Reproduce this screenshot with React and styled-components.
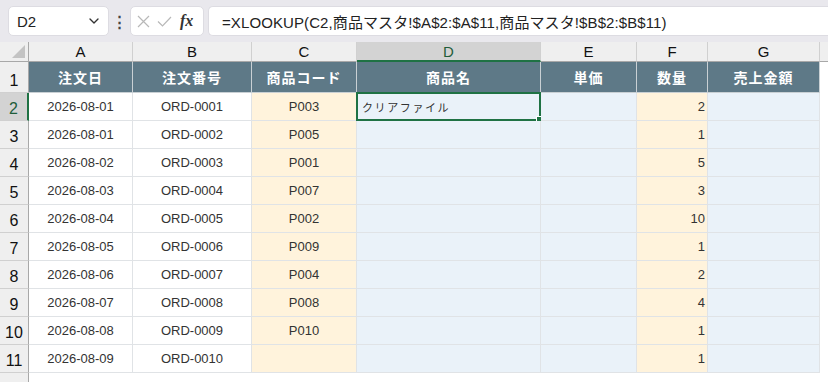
import React from "react";
import styled, { createGlobalStyle } from "styled-components";
import { ChevronDown } from "lucide-react";

const GlobalStyle = createGlobalStyle`
  html, body {
    margin: 0;
    padding: 0;
    background: #ffffff;
    overflow: hidden;
  }
  body {
    font-family: "Liberation Sans", "Noto Sans CJK JP", Arial, sans-serif;
  }
`;

const COLS = [104, 119, 105, 184, 96, 71, 112];
const LETTERS = ["A", "B", "C", "D", "E", "F", "G"];
const HEADERS = ["注文日", "注文番号", "商品コード", "商品名", "単価", "数量", "売上金額"];
const FILLS = ["#ffffff", "#ffffff", "#fff3dc", "#eaf2f9", "#eaf2f9", "#fff3dc", "#eaf2f9"];
const ALIGN = ["center", "center", "center", "left", "right", "right", "right"];

const ROWS = [
  ["2026-08-01", "ORD-0001", "P003", "クリアファイル", "", "2", ""],
  ["2026-08-01", "ORD-0002", "P005", "", "", "1", ""],
  ["2026-08-02", "ORD-0003", "P001", "", "", "5", ""],
  ["2026-08-03", "ORD-0004", "P007", "", "", "3", ""],
  ["2026-08-04", "ORD-0005", "P002", "", "", "10", ""],
  ["2026-08-05", "ORD-0006", "P009", "", "", "1", ""],
  ["2026-08-06", "ORD-0007", "P004", "", "", "2", ""],
  ["2026-08-07", "ORD-0008", "P008", "", "", "4", ""],
  ["2026-08-08", "ORD-0009", "P010", "", "", "1", ""],
  ["2026-08-09", "ORD-0010", "", "", "", "1", ""],
];

const Page = styled.div`
  width: 828px;
  height: 382px;
  overflow: hidden;
  background: #ffffff;
`;

const Toolbar = styled.div`
  display: flex;
  align-items: center;
  height: 42px;
  padding: 0 0 0 8px;
  box-sizing: border-box;
  background: #e9e8ed;
`;

const NameBox = styled.div`
  display: flex;
  align-items: center;
  justify-content: space-between;
  width: 101px;
  height: 30px;
  box-sizing: border-box;
  padding: 0 6px 0 8px;
  background: #ffffff;
  border: 1px solid #dddce2;
  border-radius: 5px;
  font-size: 15px;
  color: #222;
`;

const Dots = styled.div`
  width: 21px;
  text-align: center;
  font-size: 15px;
  font-weight: bold;
  color: #444;
  line-height: 1;
`;

const FxBox = styled.div`
  display: flex;
  align-items: center;
  gap: 7px;
  width: 74px;
  height: 30px;
  box-sizing: border-box;
  padding: 0 4px 0 6px;
  background: #ffffff;
  border: 1px solid #dddce2;
  border-radius: 5px;
  color: #b8b8b8;
`;

const Fx = styled.span`
  font-family: "Liberation Serif", "DejaVu Serif", serif;
  font-style: italic;
  font-weight: bold;
  font-size: 16px;
  color: #333;
  margin-left: 1px;
`;

const FormulaBox = styled.div`
  flex: 1;
  display: flex;
  align-items: center;
  margin-left: 4px;
  height: 30px;
  box-sizing: border-box;
  padding-left: 13px;
  background: #ffffff;
  border: 1px solid #dddce2;
  border-right: none;
  border-radius: 5px 0 0 5px;
  font-size: 15px;
  letter-spacing: 0.1px;
  color: #222;
  white-space: nowrap;
`;

const Grid = styled.div`
  display: grid;
  grid-template-columns: 29px ${COLS.map((w) => `${w}px`).join(" ")} 1fr;
  grid-template-rows: 20px 31px repeat(11, 28px);
`;

const Corner = styled.div`
  position: relative;
  background: #efefef;
  border-right: 1px solid #a8a8a8;
  border-bottom: 1px solid #a8a8a8;
  box-sizing: border-box;
  &::after {
    content: "";
    position: absolute;
    right: 3px;
    bottom: 3px;
    border-left: 13px solid transparent;
    border-bottom: 13px solid #c3c3c3;
  }
`;

const ColHead = styled.div`
  display: flex;
  align-items: center;
  justify-content: center;
  box-sizing: border-box;
  background: ${(p) => (p.$active ? "#d3d3d3" : "#efefef")};
  border-right: 1px solid #d0d0d0;
  border-bottom: ${(p) => (p.$active ? "2px solid #1f7244" : "1px solid #a8a8a8")};
  color: ${(p) => (p.$active ? "#1f5d3a" : "#111")};
  font-size: 15px;
  padding-top: ${(p) => (p.$active ? "1px" : "0")};
`;

const RowHead = styled.div`
  display: flex;
  align-items: flex-end;
  justify-content: center;
  box-sizing: border-box;
  padding-bottom: 2px;
  background: ${(p) => (p.$active ? "#d3d3d3" : "#efefef")};
  border-right: ${(p) => (p.$active ? "2px solid #1f7244" : "1px solid #a8a8a8")};
  border-bottom: 1px solid #d0d0d0;
  color: ${(p) => (p.$active ? "#1f5d3a" : "#111")};
  font-size: 16px;
`;

const HeadCell = styled.div`
  display: flex;
  align-items: center;
  justify-content: center;
  box-sizing: border-box;
  background: #5e7987;
  border-right: 1px solid #c9d0d4;
  border-bottom: 1px solid #c9d0d4;
  color: #ffffff;
  font-weight: bold;
  font-size: 14px;
  letter-spacing: 1px;
  font-family: "Noto Sans CJK JP", "Liberation Sans", sans-serif;
`;

const Cell = styled.div`
  position: relative;
  display: flex;
  align-items: center;
  justify-content: ${(p) =>
    p.$align === "left" ? "flex-start" : p.$align === "right" ? "flex-end" : "center"};
  box-sizing: border-box;
  padding: 0 ${(p) => (p.$align === "right" ? "2px" : "5px")} 0 5px;
  background: ${(p) => p.$fill};
  border-right: 1px solid #e0e3e6;
  border-bottom: 1px solid #e0e3e6;
  color: #333;
  font-size: 13px;
  white-space: nowrap;
`;

const JpText = styled.span`
  font-family: "Noto Sans CJK JP", sans-serif;
  font-size: 11px;
  letter-spacing: 1.6px;
  color: #333;
`;

const Active = styled.div`
  position: absolute;
  left: -1px;
  top: -1px;
  right: -1px;
  bottom: -1px;
  border: 2px solid #1f7244;
  pointer-events: none;
  &::after {
    content: "";
    position: absolute;
    right: -5px;
    bottom: -5px;
    width: 6px;
    height: 6px;
    background: #1f7244;
    border: 1px solid #ffffff;
  }
`;

const Blank = styled.div`
  background: ${(p) => (p.$head ? "#efefef" : "#ffffff")};
  border-bottom: ${(p) => (p.$head ? "1px solid #a8a8a8" : "none")};
  box-sizing: border-box;
`;

const CancelIcon = () => (
  <svg width="13" height="13" viewBox="0 0 13 13" fill="none" stroke="currentColor" strokeWidth="1.2">
    <path d="M1 1 L12 12 M12 1 L1 12" />
  </svg>
);

const EnterIcon = () => (
  <svg width="15" height="11" viewBox="0 0 15 11" fill="none" stroke="currentColor" strokeWidth="1.2">
    <path d="M1 5.5 L5.5 10 L14 1" />
  </svg>
);

export default function App() {
  return (
    <Page>
      <GlobalStyle />
      <Toolbar>
        <NameBox>
          <span>D2</span>
          <ChevronDown size={16} strokeWidth={2} color="#333" />
        </NameBox>
        <Dots>⋮</Dots>
        <FxBox>
          <CancelIcon />
          <EnterIcon />
          <Fx>fx</Fx>
        </FxBox>
        <FormulaBox>=XLOOKUP(C2,商品マスタ!$A$2:$A$11,商品マスタ!$B$2:$B$11)</FormulaBox>
      </Toolbar>
      <Grid>
        <Corner />
        {LETTERS.map((l) => (
          <ColHead key={l} $active={l === "D"}>
            {l}
          </ColHead>
        ))}
        <Blank $head />

        <RowHead>1</RowHead>
        {HEADERS.map((h) => (
          <HeadCell key={h}>{h}</HeadCell>
        ))}
        <Blank />

        {ROWS.map((row, r) => (
          <React.Fragment key={r}>
            <RowHead $active={r === 0}>{r + 2}</RowHead>
            {row.map((v, c) => (
              <Cell key={c} $fill={FILLS[c]} $align={ALIGN[c]}>
                {c === 3 && v ? <JpText>{v}</JpText> : v}
                {r === 0 && c === 3 && <Active />}
              </Cell>
            ))}
            <Blank />
          </React.Fragment>
        ))}

        <RowHead>12</RowHead>
      </Grid>
    </Page>
  );
}
